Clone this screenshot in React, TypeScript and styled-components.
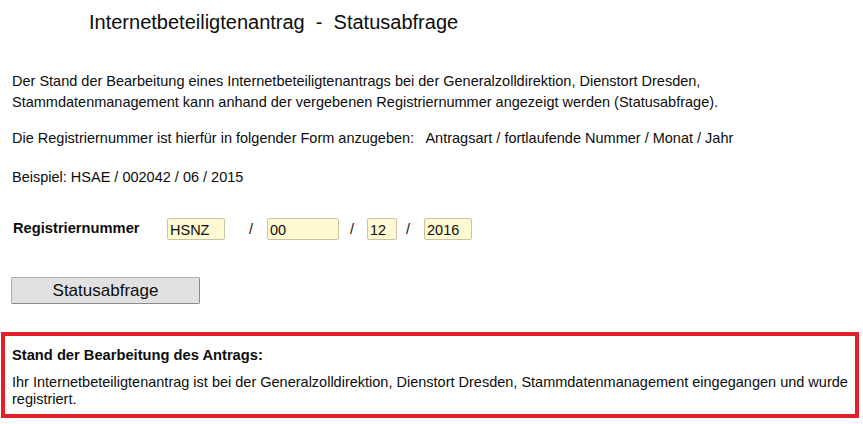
import { createGlobalStyle } from "styled-components";
import styled from "styled-components";

const GlobalStyle = createGlobalStyle`
  body {
    margin: 0;
    background: #ffffff;
    font-family: "Liberation Sans", Arial, sans-serif;
    color: #0d0d0d;
  }
`;

const Page = styled.div`
  width: 863px;
  height: 424px;
  overflow: hidden;
  display: flex;
  flex-direction: column;
`;

const Title = styled.h1`
  margin: 11px 0 0 89px;
  font-size: 20px;
  font-weight: normal;
  line-height: 22px;
  white-space: pre;
`;

const Intro = styled.div`
  margin: 38px 0 0 12px;
  font-size: 14.5px;
  line-height: 21px;
`;

const Paragraph = styled.p<{ $gap?: number }>`
  margin: 0 0 ${(p) => p.$gap ?? 18}px 0;
  white-space: pre-wrap;
`;

const FormRow = styled.div`
  display: flex;
  align-items: center;
  margin: 30px 0 0 13px;
  height: 22px;
`;

const Label = styled.label`
  width: 154px;
  font-size: 14.7px;
  font-weight: bold;
  padding-bottom: 2px;
`;

const Field = styled.input<{ $w: number }>`
  box-sizing: border-box;
  width: ${(p) => p.$w}px;
  height: 22px;
  padding: 2px 2px 0;
  border: 1px solid #cbc3a4;
  border-radius: 2px;
  background: #fffad2;
  font-family: "Liberation Sans", Arial, sans-serif;
  font-size: 14.5px;
  color: #0d0d0d;
  outline: none;
`;

const Slash = styled.span<{ $w: number; $pad: number }>`
  box-sizing: border-box;
  width: ${(p) => p.$w}px;
  padding-left: ${(p) => p.$pad}px;
  font-size: 14.5px;
`;

const SubmitButton = styled.button`
  box-sizing: border-box;
  margin: 37px 0 0 11px;
  width: 189px;
  height: 27px;
  background: #e1e1e1;
  border: 1px solid #adadad;
  border-right-color: #8a8a8a;
  border-bottom-color: #8a8a8a;
  border-radius: 2px;
  font-family: "Liberation Sans", Arial, sans-serif;
  font-size: 17px;
  color: #0d0d0d;
  padding: 0;
`;

const ResultBox = styled.section`
  box-sizing: border-box;
  margin: 28px 0 0 1px;
  width: 858px;
  height: 86px;
  border: 4px solid #e3202a;
  padding: 10px 7px 0;
`;

const ResultTitle = styled.h2`
  margin: 0;
  font-size: 14.7px;
  font-weight: bold;
  line-height: 18px;
`;

const ResultText = styled.p`
  margin: 10px 0 0;
  font-size: 14.5px;
  line-height: 17px;
`;

const App = () => {
  return (
    <Page>
      <GlobalStyle />
      <Title>Internetbeteiligtenantrag  -  Statusabfrage</Title>
      <Intro>
        <Paragraph $gap={15}>
          Der Stand der Bearbeitung eines Internetbeteiligtenantrags bei der
          Generalzolldirektion, Dienstort Dresden,
          <br />
          Stammdatenmanagement kann anhand der vergebenen Registriernummer
          angezeigt werden (Statusabfrage).
        </Paragraph>
        <Paragraph>
          {"Die Registriernummer ist hierfür in folgender Form anzugeben:   Antragsart / fortlaufende Nummer / Monat / Jahr"}
        </Paragraph>
        <Paragraph $gap={0}>Beispiel: HSAE / 002042 / 06 / 2015</Paragraph>
      </Intro>
      <FormRow>
        <Label>Registriernummer</Label>
        <Field $w={58} defaultValue="HSNZ" />
        <Slash $w={42} $pad={24}>/</Slash>
        <Field $w={72} defaultValue="00" />
        <Slash $w={28} $pad={11}>/</Slash>
        <Field $w={30} defaultValue="12" />
        <Slash $w={27} $pad={9}>/</Slash>
        <Field $w={48} defaultValue="2016" />
      </FormRow>
      <SubmitButton>Statusabfrage</SubmitButton>
      <ResultBox>
        <ResultTitle>Stand der Bearbeitung des Antrags:</ResultTitle>
        <ResultText>
          Ihr Internetbeteiligtenantrag ist bei der Generalzolldirektion,
          Dienstort Dresden, Stammdatenmanagement eingegangen und wurde
          registriert.
        </ResultText>
      </ResultBox>
    </Page>
  );
};

export default App;
